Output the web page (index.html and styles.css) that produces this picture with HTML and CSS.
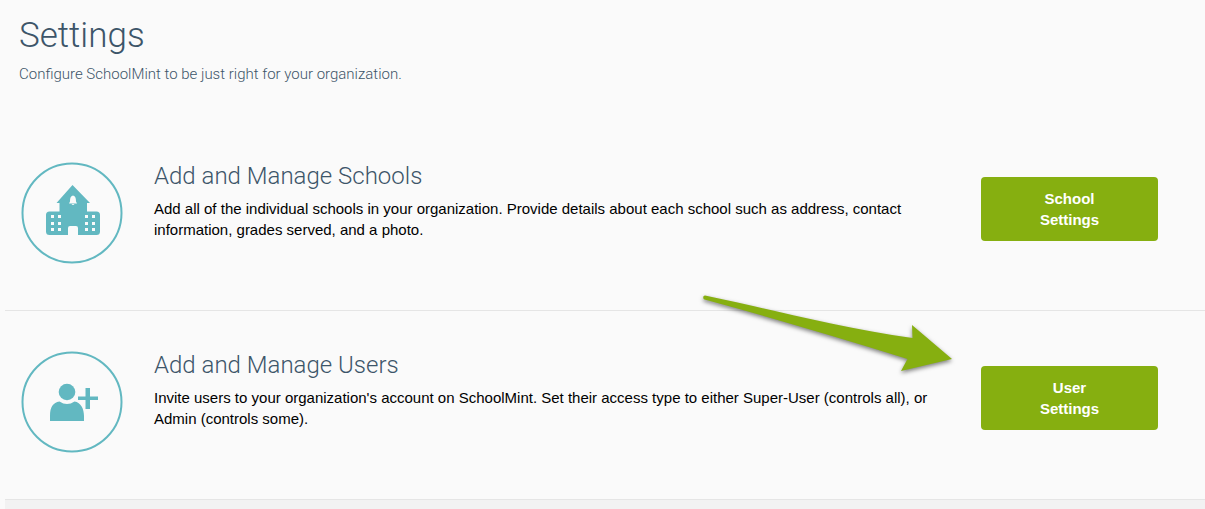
FILE: index.html
```html
<!DOCTYPE html>
<html lang="en">

<head>
    <meta charset="UTF-8">
    <meta name="viewport" content="width=device-width, initial-scale=1.0">
    <title>SchoolMint - Settings</title>
    <link rel="stylesheet" href="styles.css">
</head>

<body>
    <header class="page-header">
        <h1>Settings</h1>
        <p>Configure SchoolMint to be just right for your organization.</p>
    </header>

    <main class="settings-list">
        <section class="settings-item">
            <div class="item-icon">
                <svg viewBox="0 0 102 102" aria-hidden="true">
                    <circle class="ring" cx="51" cy="51" r="49.500" />
                    <path d="M51.500 23 L69 41 H66 V49.500 H75.500 Q79 49.500 79 53 V69.500 Q79 73 75.500 73 H57 V66 Q57 64 55 64 H49 Q47 64 47 66 V73 H28.500 Q25 73 25 69.500 V53 Q25 49.500 28.500 49.500 H38.500 V41 H35.500 Z" />
                    <g class="cutout">
                        <path d="M52 33.500 C54.500 34 55 36.500 55 39.500 L56 41.500 H48 L49 39.500 C49 36.500 49.500 34 52 33.500 Z M50.500 42 H53.500 Q52 44 50.500 42 Z" />
                        <rect x="30" y="53" width="3" height="3" />
                        <rect x="37" y="53" width="3" height="3" />
                        <rect x="30" y="60" width="3" height="3" />
                        <rect x="37" y="60" width="3" height="3" />
                        <rect x="30" y="66" width="3" height="3" />
                        <rect x="37" y="66" width="3" height="3" />
                        <rect x="64" y="53" width="3" height="3" />
                        <rect x="71" y="53" width="3" height="3" />
                        <rect x="64" y="60" width="3" height="3" />
                        <rect x="71" y="60" width="3" height="3" />
                        <rect x="64" y="66" width="3" height="3" />
                        <rect x="71" y="66" width="3" height="3" />
                    </g>
                </svg>
            </div>
            <div class="item-details">
                <h2>Add and Manage Schools</h2>
                <p>Add all of the individual schools in your organization. Provide details about each school such as address, contact information, grades served, and a photo.</p>
            </div>
            <button type="button" class="settings-button">School<br>Settings</button>
        </section>

        <section class="settings-item">
            <div class="item-icon">
                <svg viewBox="0 0 102 102" aria-hidden="true">
                    <circle class="ring" cx="51" cy="51" r="49.500" />
                    <circle cx="46" cy="41" r="8.300" />
                    <path d="M29 70 V65 C29 56 32 51.500 38.500 50.500 Q46 55.500 53.500 50.500 C60 51.500 63 58 63 65 V70 Z" />
                    <path d="M64.500 37 H69 V45.500 H77 V49 H69 V58 H64.500 V49 H57 V45.500 H64.500 Z" />
                </svg>
            </div>
            <div class="item-details">
                <h2>Add and Manage Users</h2>
                <p>Invite users to your organization's account on SchoolMint. Set their access type to either Super-User (controls all), or Admin (controls some).</p>
            </div>
            <button type="button" class="settings-button">User<br>Settings</button>
            <svg class="pointer-arrow" viewBox="0 0 270 95" aria-hidden="true">
                <path d="M10 10.500 C75 24 145 43 217.500 53 L217 40 L257 74 L206 86 L212.500 74 C145 53 75 32 9.500 14.500 C7.500 13.500 8 10.500 10 10.500 Z" />
            </svg>
        </section>
    </main>

    <div class="next-panel"></div>
</body>
</html>
```

FILE: styles.css
```css
* {
    box-sizing: border-box;
}

body {
    font-family: "Liberation Sans", Arial, sans-serif;
    font-size: 15px;
    line-height: 21px;
    margin: 0;
    padding: 0;
    min-height: 100vh;
    background-color: #fafafa;
    color: #000;
    display: flex;
    flex-direction: column;
}

h1,
h2,
p {
    margin: 0;
}

.page-header {
    padding: 15px 19px 37px;
    font-family: Roboto, "Liberation Sans", sans-serif;
    font-weight: 300;
    color: #3d5569;
}

.page-header h1 {
    font-size: 35px;
    font-weight: 300;
    line-height: 42px;
    margin-bottom: 7px;
}

.settings-list {
    margin-left: 5px;
}

.settings-item {
    position: relative;
    display: flex;
    align-items: flex-start;
    padding: 40px 47px 46px 16px;
    border-bottom: 1px solid #e5e5e5;
}

.item-icon {
    flex: none;
    width: 102px;
    height: 102px;
    margin-right: 31px;
}

.item-icon svg {
    display: block;
    width: 100%;
    fill: #62b8c1;
}

.item-icon .ring {
    fill: none;
    stroke: #62b8c1;
    stroke-width: 2;
}

.item-icon .cutout {
    fill: #fafafa;
}

.item-details {
    flex: 1;
    padding-right: 40px;
}

.item-details h2 {
    font-family: Roboto, "Liberation Sans", sans-serif;
    font-size: 24px;
    font-weight: 300;
    line-height: 28px;
    margin-bottom: 8px;
    color: #3d5569;
}

.settings-button {
    flex: none;
    width: 177px;
    margin-top: 15px;
    padding: 11px 20px;
    background-color: #86af10;
    color: #fff;
    border: none;
    border-radius: 4px;
    cursor: pointer;
    font-family: inherit;
    font-size: 15px;
    font-weight: 700;
    line-height: 21px;
}

.settings-button:hover {
    background-color: #769b0d;
}

/* callout lying over the rows */
.pointer-arrow {
    position: absolute;
    top: -26px;
    right: 240px;
    width: 270px;
    height: 95px;
    fill: #86af10;
    filter: drop-shadow(0 2px 2px rgba(0, 0, 0, 0.5));
    pointer-events: none;
}

.next-panel {
    flex: 1;
    margin-left: 5px;
    background-color: #f2f2f2;
}
```
